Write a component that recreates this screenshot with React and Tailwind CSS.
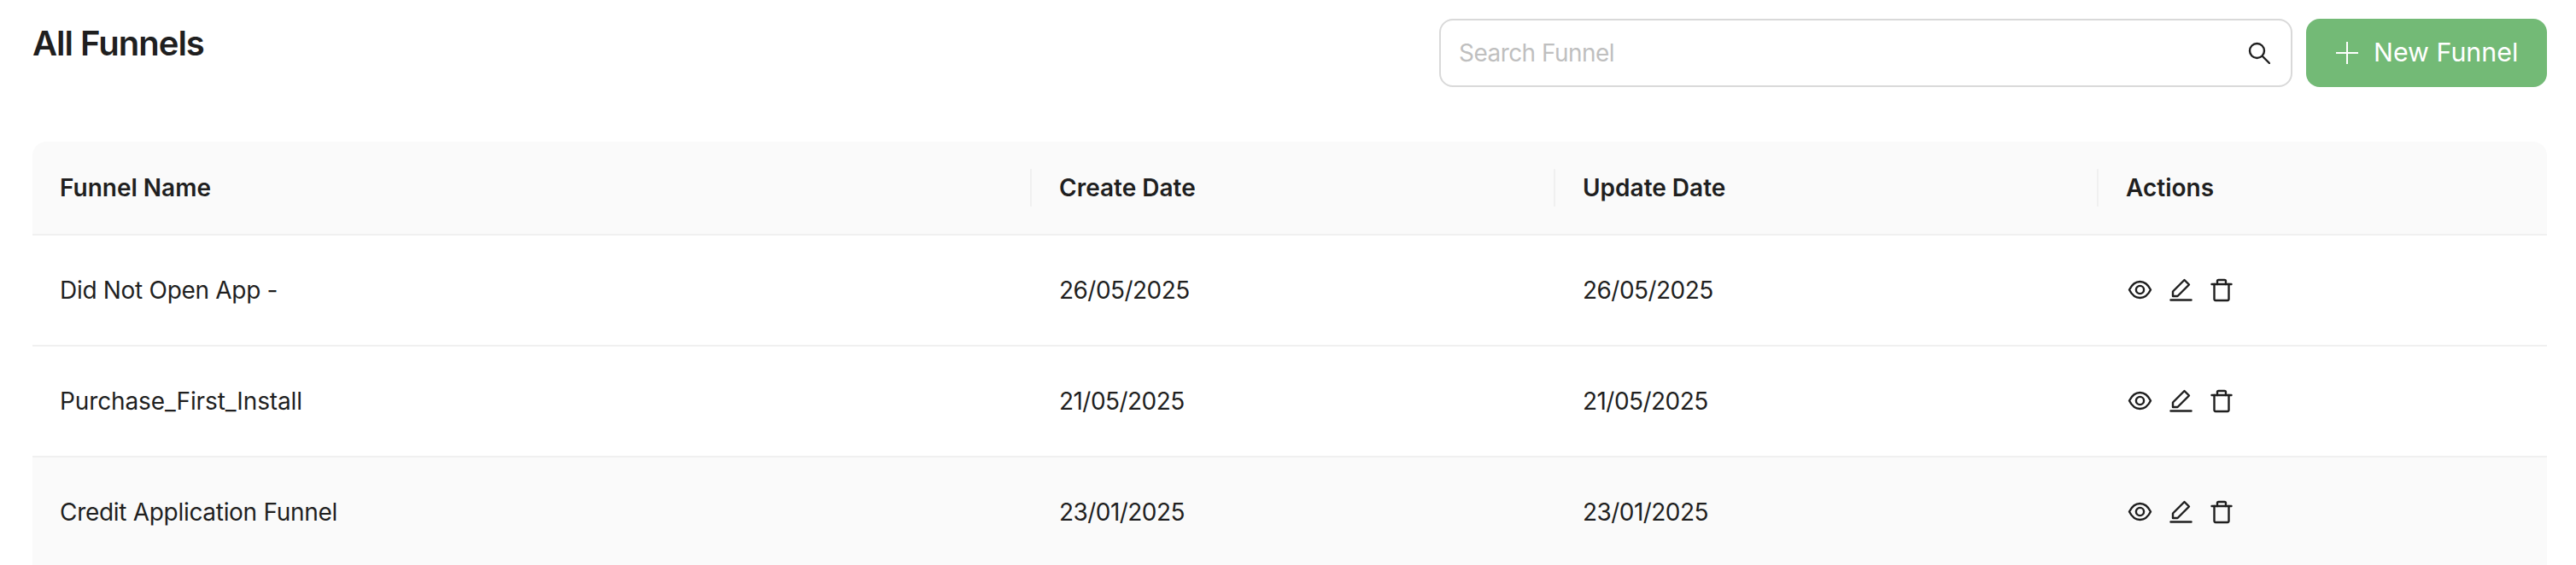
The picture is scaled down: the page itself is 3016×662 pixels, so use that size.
const PenIcon = () => (
  <svg viewBox="0 0 32 32" className="w-8 h-8" fill="none" stroke="#1f1f1f" strokeWidth="2.4" strokeLinejoin="round" strokeLinecap="round">
    <path d="M7 17.500 20.500 4 26 9.500 12.500 23H7z" />
    <path d="M4.500 27.500h24" />
  </svg>
);
const EyeIcon = () => (
  <svg viewBox="0 0 32 32" className="w-8 h-8" fill="none" stroke="#1f1f1f" strokeWidth="2.4" strokeLinejoin="round">
    <path d="M4 15.500C7 9.500 11 6 16.500 6S26 9.500 29 15.500C26 21.500 22 25 16.500 25S7 21.500 4 15.500z" />
    <circle cx="16.500" cy="15.500" r="4.600" />
  </svg>
);
const TrashIcon = () => (
  <svg viewBox="0 0 32 32" className="w-8 h-8" fill="none" stroke="#1f1f1f" strokeWidth="2.4" strokeLinejoin="round" strokeLinecap="round">
    <path d="M4.500 9h23" />
    <path d="M7.500 9v17.500a1.500 1.500 0 0 0 1.500 1.500h14a1.500 1.500 0 0 0 1.500-1.500V9" />
    <path d="M11 9V5.500A1.500 1.500 0 0 1 12.500 4h7A1.500 1.500 0 0 1 21 5.500V9" />
  </svg>
);

const rows = [
  { name: "Did Not Open App -", created: "26/05/2025", updated: "26/05/2025", bg: "bg-white", track: "tracking-[-0.3px]" },
  { name: "Purchase_First_Install", created: "21/05/2025", updated: "21/05/2025", bg: "bg-white", track: "tracking-[-0.12px]" },
  { name: "Credit Application Funnel", created: "23/01/2025", updated: "23/01/2025", bg: "bg-[#fafafa]", track: "tracking-[-0.3px]" },
];

const grid = "grid grid-cols-[1170px_613px_636px_525px]";

export default function App() {
  return (
    <div className="bg-white h-[662px] overflow-hidden pl-[38px] pr-[34px] pt-[22px] font-['Inter',sans-serif] text-[#1f1f1f]">
      <div className="flex items-start justify-between h-[144px]">
        <h1 className="text-[40px] leading-[48px] font-semibold tracking-[-1px] mt-[5px]">All Funnels</h1>
        <div className="flex gap-[16px]">
          <div className="flex items-center justify-between w-[999px] h-[80px] border-2 border-[#d9d9d9] rounded-2xl pl-[21px] pr-[24px]">
            <span className="text-[28px] tracking-[-0.55px] text-[#bfbfbf]">Search Funnel</span>
            <svg viewBox="0 0 26 26" className="w-[26px] h-[26px]" fill="none" stroke="#1f1f1f" strokeWidth="2.4" strokeLinecap="round">
              <circle cx="10.500" cy="10.500" r="8.500" />
              <path d="M17 17 25 25" />
            </svg>
          </div>
          <button className="flex items-center gap-[18px] w-[282px] h-[80px] bg-[#73ba76] text-white rounded-2xl pl-[35px] text-[30.4px]">
            <svg viewBox="0 0 26 26" className="w-[26px] h-[26px]" fill="none" stroke="#fff" strokeWidth="2">
              <path d="M13 0v26M0 13h26" />
            </svg>
            New Funnel
          </button>
        </div>
      </div>
      <div className="text-[28px]">
        <div className={`${grid} h-[110px] bg-[#fafafa] rounded-t-2xl border-b-2 border-[#f0f0f0] font-semibold`}>
          {["Funnel Name", "Create Date", "Update Date", "Actions"].map((h, i) => (
            <div key={h} className="relative flex items-center px-8">
              {h}
              {i < 3 && <div className="absolute right-0 top-[32px] h-[44px] w-[2px] bg-[#f0f0f0]" />}
            </div>
          ))}
        </div>
        {rows.map((r) => (
          <div key={r.name} className={`${grid} h-[130px] border-b-2 border-[#f0f0f0] ${r.bg}`}>
            <div className={`flex items-center px-8 ${r.track}`}>{r.name}</div>
            <div className="flex items-center px-8 tracking-[-0.55px]">{r.created}</div>
            <div className="flex items-center px-8 tracking-[-0.55px]">{r.updated}</div>
            <div className="flex items-center px-8 gap-4">
              <EyeIcon />
              <PenIcon />
              <TrashIcon />
            </div>
          </div>
        ))}
      </div>
    </div>
  );
}
